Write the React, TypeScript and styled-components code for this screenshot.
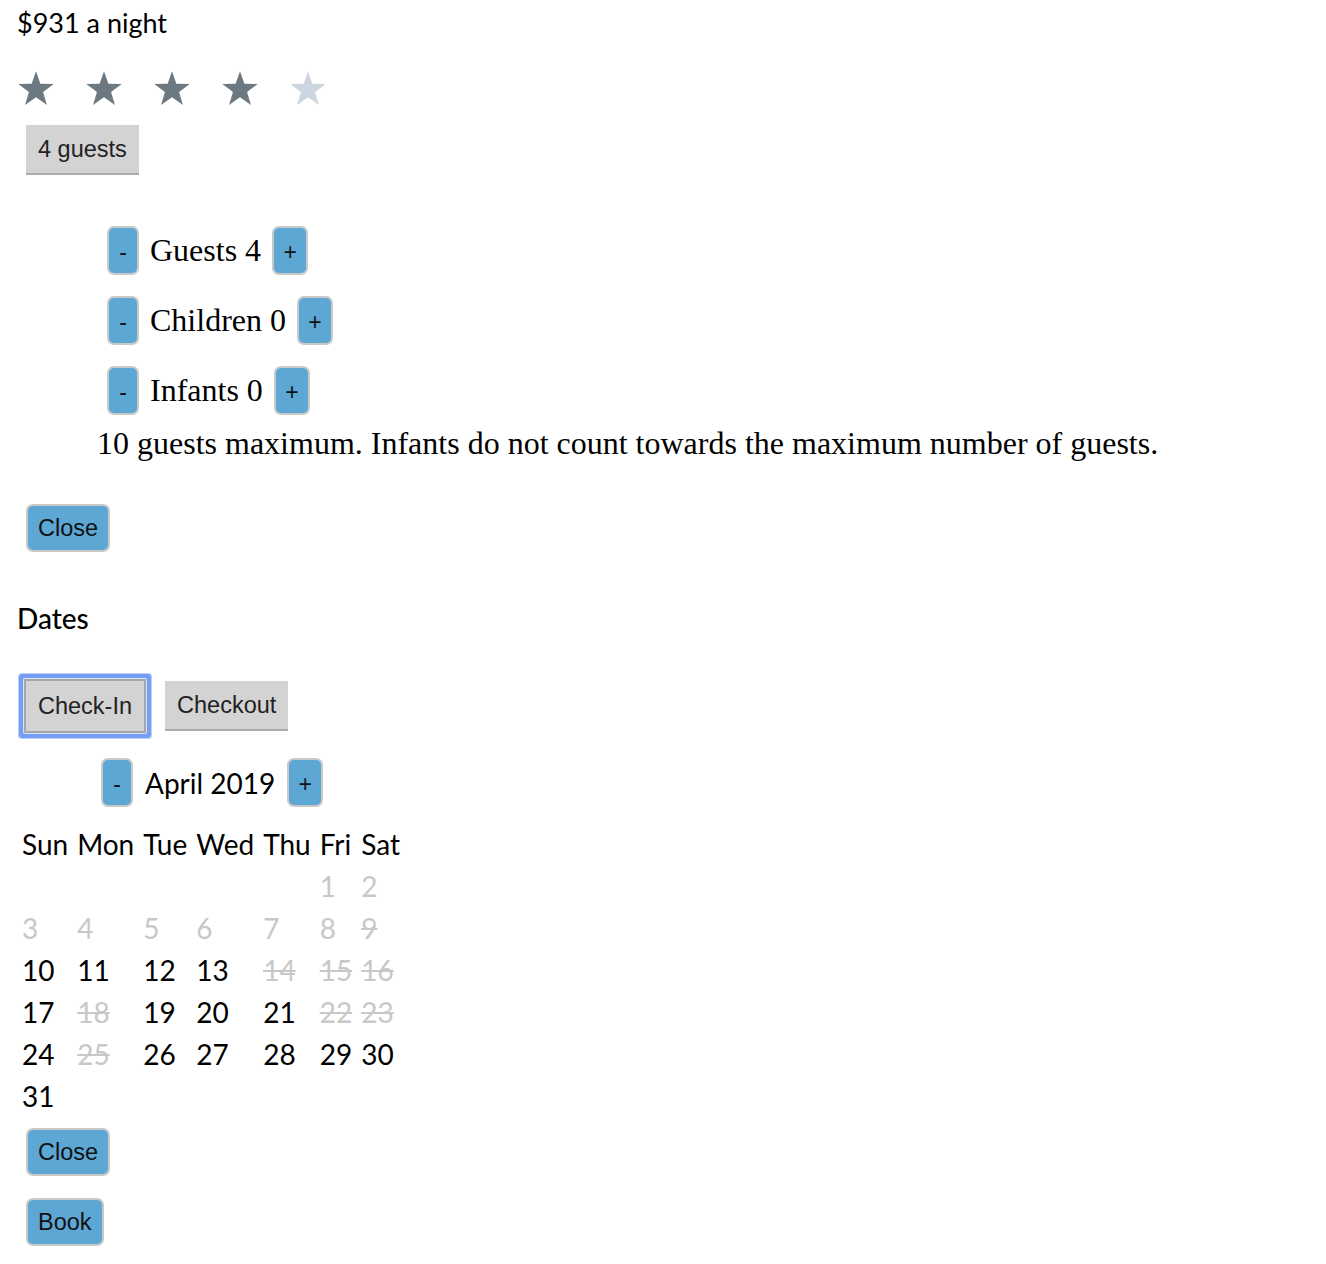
import React from "react";
import styled, { createGlobalStyle } from "styled-components";

const Global = createGlobalStyle`
  html, body { margin: 0; padding: 0; background: #fff; }
  body { font-family: "Lato", "Liberation Sans", sans-serif; color: #000; }
`;

const Page = styled.div`
  padding: 6px 0 0 17px;
  display: flex;
  flex-direction: column;
  align-items: flex-start;
`;

const Price = styled.div`
  font-family: "Lato", sans-serif;
  font-size: 27px;
  line-height: 34px;
`;

const Stars = styled.div`
  display: flex;
  gap: 30px;
  margin-top: 30px;
`;

const GrayButton = styled.button<{ $focused?: boolean }>`
  font-family: "Liberation Sans", Arial, sans-serif;
  font-size: 23.5px;
  color: #222;
  background: #d3d3d3;
  border: none;
  border-bottom: 2px solid #ababab;
  border-radius: 0;
  height: 50px;
  padding: 0 12px;
  cursor: pointer;
  ${(p) =>
    p.$focused &&
    `
    height: 54px;
    border: 2px solid #a6a6a6;
    border-radius: 1px;
    box-shadow: 0 0 0 1px #d9e3fb, 0 0 0 5px #779ef5, 0 0 0 6px #bcd0fa;
  `}
`;

const BlueButton = styled.button<{ $wide?: boolean }>`
  font-family: "Liberation Sans", Arial, sans-serif;
  font-size: 23.5px;
  color: #111;
  background: #5ca7d4;
  border: 2px solid #c9c9c9;
  border-radius: 7px;
  height: 48px;
  padding: 0 10px;
  cursor: pointer;
`;

const SmallBlue = styled(BlueButton)`
  height: 49px;
  padding: 4px 0 0;
  width: ${(p) => (p.$wide ? "36px" : "32px")};
  font-size: 23px;
`;

const GuestsToggle = styled(GrayButton)`
  margin: 18px 0 0 9px;
`;

const CounterList = styled.div`
  display: flex;
  flex-direction: column;
  gap: 21px;
  margin: 51px 0 0 90px;
`;

const CounterRow = styled.div`
  display: flex;
  align-items: center;
  gap: 11px;
`;

const SerifLabel = styled.span`
  font-family: "Liberation Serif", "Times New Roman", serif;
  font-size: 32px;
  line-height: 37px;
`;

const Info = styled.p`
  font-family: "Liberation Serif", "Times New Roman", serif;
  font-size: 32px;
  line-height: 37px;
  margin: 10px 0 0 80px;
`;

const ActionButton = styled(BlueButton)<{ $top: number }>`
  margin: ${(p) => p.$top}px 0 0 9px;
`;

const Heading = styled.h3`
  font-family: "Lato", sans-serif;
  font-size: 28px;
  font-weight: 500;
  line-height: 35px;
  margin: 49px 0 0;
`;

const DateTabs = styled.div`
  display: flex;
  align-items: center;
  gap: 19px;
  margin: 43px 0 0 7px;
`;

const MonthRow = styled.div`
  display: flex;
  align-items: center;
  gap: 12px;
  margin: 25px 0 0 84px;
`;

const MonthLabel = styled.span`
  font-family: "Lato", sans-serif;
  font-size: 28px;
  line-height: 34px;
`;

const Calendar = styled.table`
  font-family: "Lato", sans-serif;
  font-size: 28px;
  border-spacing: 7px 3px;
  margin: 15px 0 0 -3px;
`;

const HeadCell = styled.th`
  font-weight: 400;
  text-align: left;
  padding: 0 1px;
  line-height: 39px;
`;

const DayCell = styled.td<{ $state: "open" | "past" | "taken" }>`
  padding: 0 1px;
  line-height: 39px;
  color: ${(p) => (p.$state === "open" ? "#000" : "#c8c8c8")};
  text-decoration: ${(p) => (p.$state === "taken" ? "line-through" : "none")};
`;

const Star = ({ filled }: { filled: boolean }) => (
  <svg width="38" height="37" viewBox="0 0 24 23">
    <path
      d="M12 0.6 L14.75 8.45 L23.2 8.6 L16.45 13.7 L18.9 21.9 L12 17 L5.1 21.9 L7.55 13.7 L0.8 8.6 L9.25 8.45 Z"
      fill={filled ? "#6c7981" : "#cdd5e1"}
    />
  </svg>
);

const counters = [
  { label: "Guests", value: 4 },
  { label: "Children", value: 0 },
  { label: "Infants", value: 0 },
];

const weekdays = ["Sun", "Mon", "Tue", "Wed", "Thu", "Fri", "Sat"];
const taken = new Set([9, 14, 15, 16, 18, 22, 23, 25]);

const stateFor = (d: number): "open" | "past" | "taken" => {
  if (taken.has(d)) return "taken";
  if (d < 10) return "past";
  return "open";
};

const weeks: (number | null)[][] = (() => {
  const cells: (number | null)[] = [null, null, null, null, null];
  for (let d = 1; d <= 31; d++) cells.push(d);
  const rows: (number | null)[][] = [];
  for (let i = 0; i < cells.length; i += 7) rows.push(cells.slice(i, i + 7));
  return rows;
})();

export default function App() {
  return (
    <>
      <Global />
      <Page>
        <Price>$931 a night</Price>
        <Stars>
          {[0, 1, 2, 3, 4].map((i) => (
            <Star key={i} filled={i < 4} />
          ))}
        </Stars>
        <GuestsToggle>4 guests</GuestsToggle>
        <CounterList>
          {counters.map((c) => (
            <CounterRow key={c.label}>
              <SmallBlue>-</SmallBlue>
              <SerifLabel>
                {c.label} {c.value}
              </SerifLabel>
              <SmallBlue $wide>+</SmallBlue>
            </CounterRow>
          ))}
        </CounterList>
        <Info>
          10 guests maximum. Infants do not count towards the maximum number of guests.
        </Info>
        <ActionButton $top={42}>Close</ActionButton>
        <Heading>Dates</Heading>
        <DateTabs>
          <GrayButton $focused>Check-In</GrayButton>
          <GrayButton>Checkout</GrayButton>
        </DateTabs>
        <MonthRow>
          <SmallBlue>-</SmallBlue>
          <MonthLabel>April 2019</MonthLabel>
          <SmallBlue $wide>+</SmallBlue>
        </MonthRow>
        <Calendar>
          <thead>
            <tr>
              {weekdays.map((w) => (
                <HeadCell key={w}>{w}</HeadCell>
              ))}
            </tr>
          </thead>
          <tbody>
            {weeks.map((row, ri) => (
              <tr key={ri}>
                {row.map((d, ci) =>
                  d === null ? (
                    <DayCell key={ci} $state="past" />
                  ) : (
                    <DayCell key={ci} $state={stateFor(d)}>
                      {d}
                    </DayCell>
                  )
                )}
              </tr>
            ))}
          </tbody>
        </Calendar>
        <ActionButton $top={9}>Close</ActionButton>
        <ActionButton $top={22}>Book</ActionButton>
      </Page>
    </>
  );
}
